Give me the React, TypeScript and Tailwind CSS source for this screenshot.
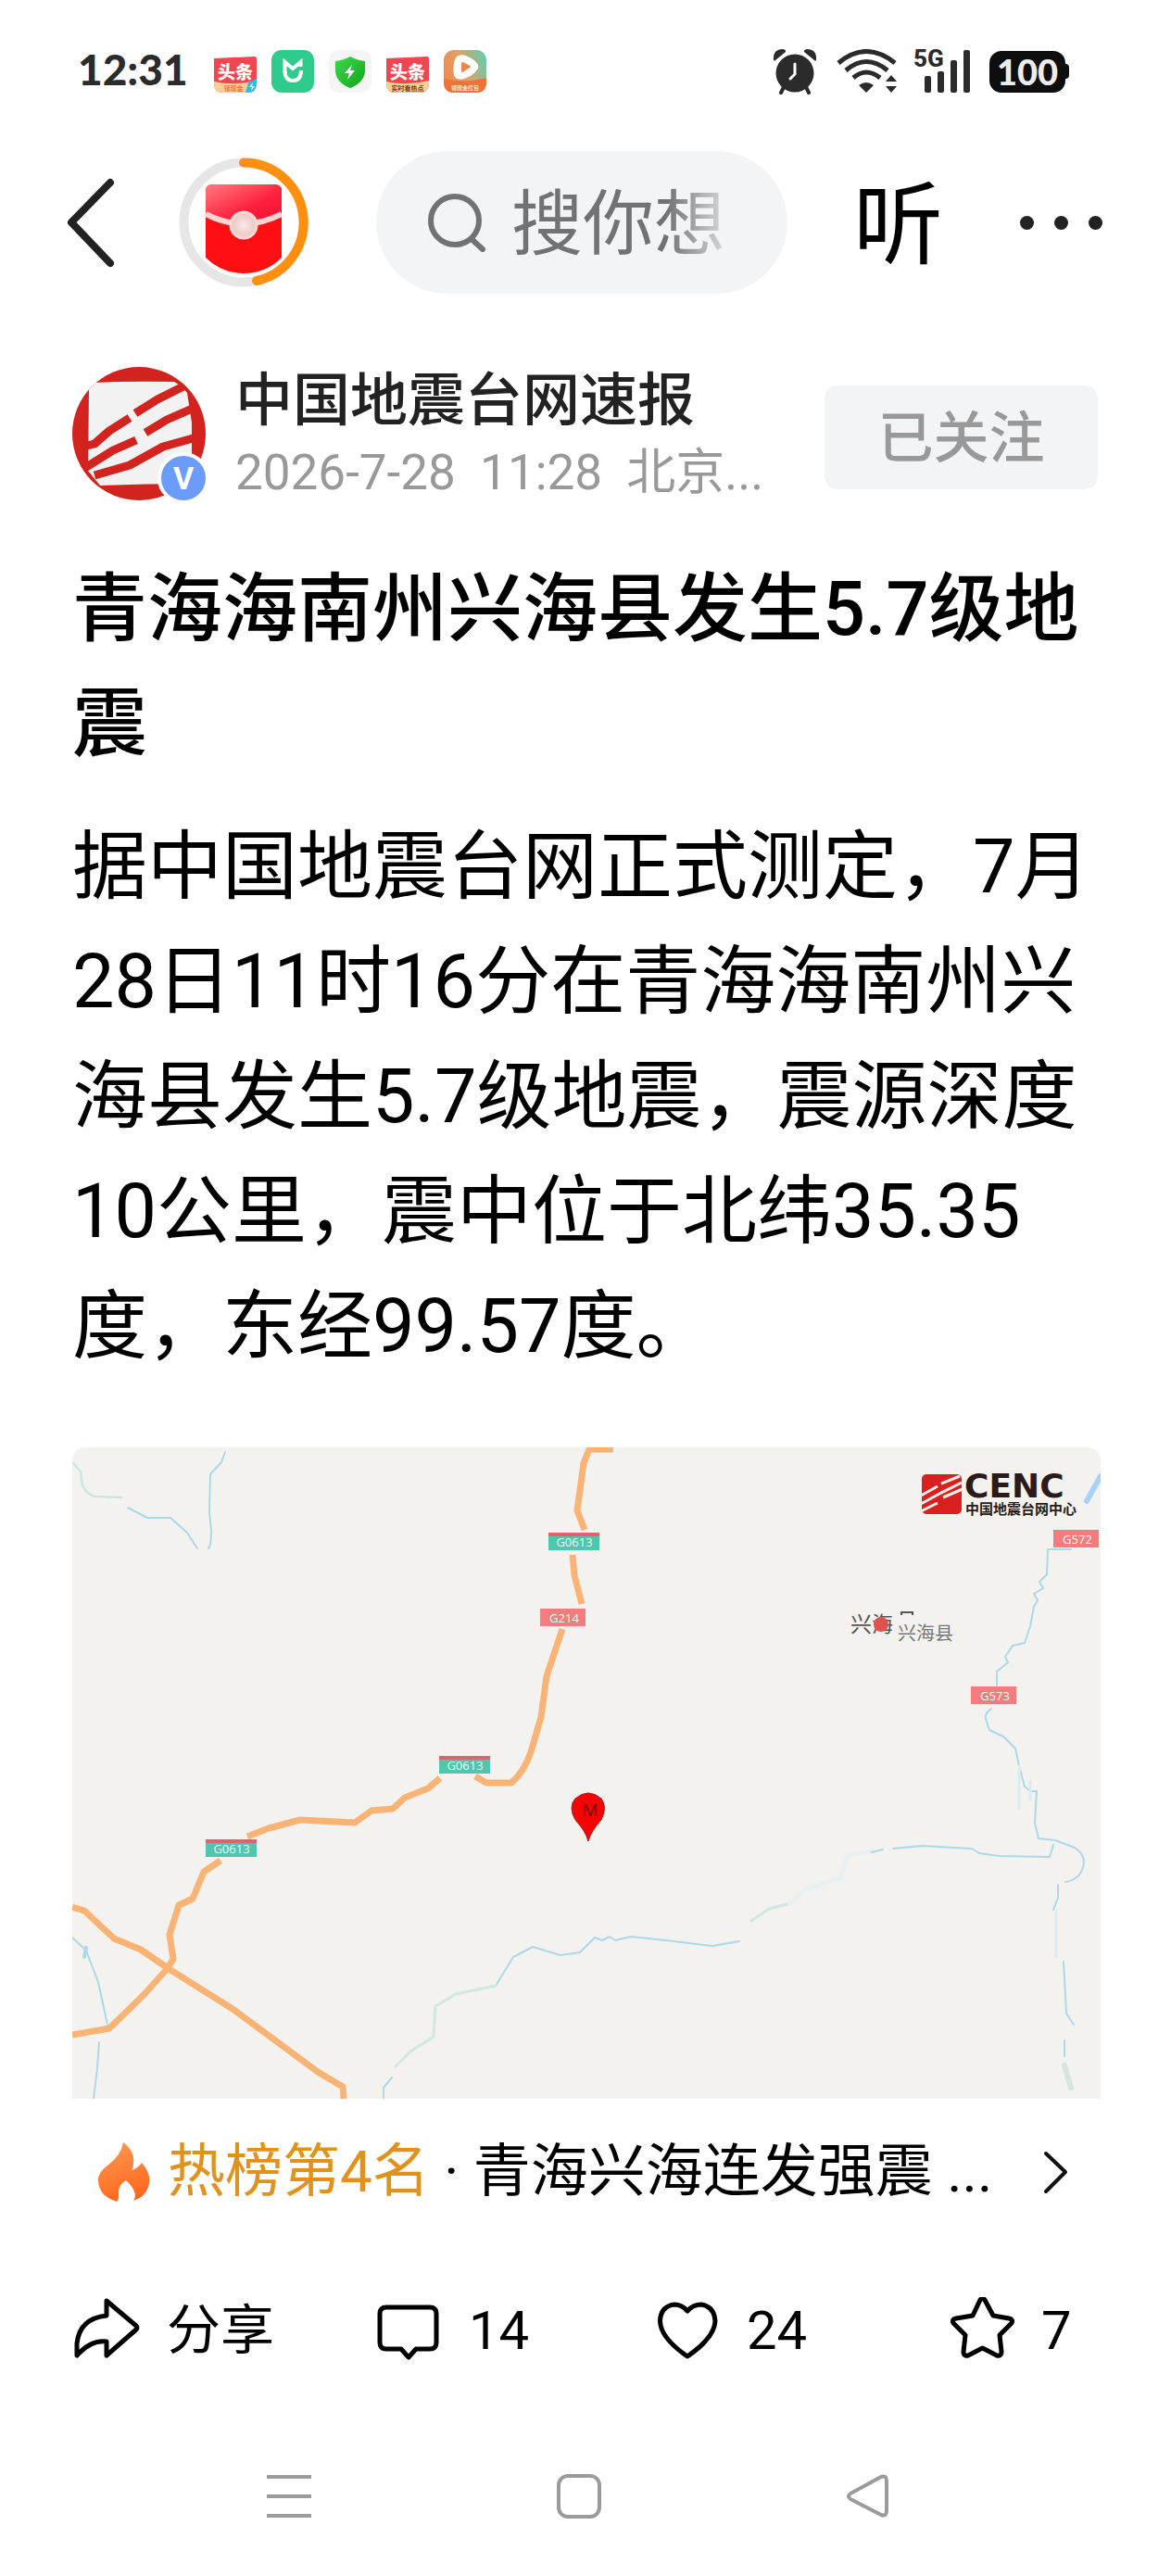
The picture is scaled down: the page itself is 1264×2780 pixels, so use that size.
import React from "react";

const CJK = "font-[Roboto,'Noto_Sans_CJK_SC',sans-serif]";

function ToutiaoBadge({ caption, accent }: { caption: string; accent: boolean }) {
  return (
    <svg viewBox="0 0 46 46" className="size-[46px]" role="img" aria-label="头条">
      <defs>
        <clipPath id={accent ? "tt-a" : "tt-b"}>
          <path d="M0 9 L44 7 Q46 7 46 10 V36 Q46 46 36 46 H10 Q0 46 0 36 Z" />
        </clipPath>
      </defs>
      <g clipPath={accent ? "url(#tt-a)" : "url(#tt-b)"}>
        <rect width="46" height="46" fill="#f0464f" />
        <path d="M0 34 Q22 39 46 33 V46 H0 Z" fill="#fbcf94" />
        {accent && <path d="M37 35 L46 31 V46 H34 Z" fill="#2cbcf0" />}
        {accent && <path d="M42 35 l-4 5 h3 l-1 4 4 -5 h-3 z" fill="#fff" />}
      </g>
      <text x="23" y="31" textAnchor="middle" fontSize="19" fontWeight="900" fill="#fff" fontFamily="Noto Sans CJK SC">头条</text>
      <text x={accent ? 21 : 23} y="44" textAnchor="middle" fontSize="7" fontWeight="700" fill={accent ? "#f0763c" : "#7a3b12"} fontFamily="Noto Sans CJK SC">{caption}</text>
    </svg>
  );
}

function StatusBar() {
  return (
    <div className="flex h-[154px] items-center justify-between pl-[84px] pr-[110px] text-[#2b2b2b]">
      <div className="flex items-center gap-4">
        <time className="mr-3 w-[119px] pb-1 whitespace-nowrap font-[Lato,sans-serif] text-[46px] leading-none font-black">12:31</time>
        <ToutiaoBadge caption="领现金" accent />
        <svg viewBox="0 0 46 46" className="size-[46px]" aria-hidden="true">
          <rect width="46" height="46" rx="11" fill="#2ecb8c" />
          <path d="M14.500 25 V13 L23 20 L31.500 13 V18" fill="none" stroke="#fff" strokeWidth="4" />
          <path d="M14.500 23 Q15 33 23 33 Q32 33 32 22" fill="none" stroke="#fff" strokeWidth="4" />
        </svg>
        <svg viewBox="0 0 46 46" className="size-[46px]" aria-hidden="true">
          <defs>
            <linearGradient id="shield" x1="0" y1="0" x2="1" y2="1">
              <stop offset="0" stopColor="#3bdc4a" />
              <stop offset="1" stopColor="#12a41c" />
            </linearGradient>
          </defs>
          <rect width="46" height="46" rx="11" fill="#f5f5f5" />
          <path d="M23 7 Q30 11 39 12 V23 Q38 35 23 41 Q8 35 7 23 V12 Q16 11 23 7 Z" fill="url(#shield)" />
          <path d="M25 16 L17 25 h5 l-2 7 8 -10 h-5 z" fill="#fff" />
        </svg>
        <ToutiaoBadge caption="实时看热点" accent={false} />
        <svg viewBox="0 0 46 46" className="size-[46px]" aria-hidden="true">
          <defs>
            <linearGradient id="player" x1="0" y1="0.600" x2="1" y2="0.200">
              <stop offset="0" stopColor="#f58a4e" />
              <stop offset="0.500" stopColor="#d7a468" />
              <stop offset="1" stopColor="#62cdb0" />
            </linearGradient>
          </defs>
          <rect width="46" height="46" rx="11" fill="url(#player)" />
          <path d="M0 31 Q22 36 46 30 V35 Q46 46 35 46 H11 Q0 46 0 35 Z" fill="#f0723a" />
          <path d="M14 7 Q20 3 28 8 Q39 14 37 20 Q33 27 22 31 Q13 33 11 27 Q9 14 14 7 Z" fill="#fff" />
          <path d="M20 14 L28 18 L20 23 Z" fill="#f0844a" stroke="#f0844a" strokeWidth="2" strokeLinejoin="round" />
          <text x="23" y="43" textAnchor="middle" fontSize="6" fontWeight="700" fill="#fde4d4" fontFamily="Noto Sans CJK SC">领现金红包</text>
        </svg>
      </div>
      <div className="flex items-center">
        <svg viewBox="0 0 48 50" className="h-[50px] w-12" fill="currentColor" aria-label="闹钟" role="img">
          <circle cx="24" cy="27" r="20.500" />
          <path d="M1 13 Q0 1 11 1 Q15 2 14 4 L3 13 Q2 14 1 13 Z M47 13 Q48 1 37 1 Q33 2 34 4 L45 13 Q46 14 47 13 Z" />
          <path d="M12 42 L9 48 M36 42 L39 48" stroke="currentColor" strokeWidth="4" strokeLinecap="round" />
          <path d="M24 17 V28 L19 33" fill="none" stroke="#fff" strokeWidth="3" strokeLinecap="round" />
        </svg>
        <svg viewBox="0 0 66 48" className="ml-[21px] h-12 w-[66px]" fill="none" stroke="currentColor" strokeWidth="5" aria-label="无线网络" role="img">
          <path d="M2 15 Q32 -10 63 15" />
          <path d="M10 23 Q32 4 55 23" />
          <path d="M18 31 Q32 19 47 31" />
          <path d="M24 39 Q32 33 40 39 L32 47 Z" fill="currentColor" stroke="none" />
          <path d="M59 28 L65 35 H53 Z M59 47 L53 40 H65 Z" fill="currentColor" stroke="none" />
        </svg>
        <svg viewBox="0 -8 62 66" className="ml-[17px] h-[66px] w-[62px]" fill="currentColor" aria-label="5G" role="img">
          <text x="0" y="20" fontSize="26" fontWeight="800" fontFamily="Roboto">5G</text>
          <rect x="12" y="30" width="7" height="18" rx="2" />
          <rect x="26" y="25" width="7" height="23" rx="2" />
          <rect x="40" y="13" width="7" height="35" rx="2" />
          <rect x="54" y="2" width="7" height="46" rx="2" />
        </svg>
        <div className="ml-5 flex items-center">
          <span className="flex h-[45px] w-[82px] items-center justify-center rounded-[13px] bg-[#0e0e0e] font-[Lato,sans-serif] text-[38px] leading-none font-black text-[#ececec]">100</span>
          <span className="h-4 w-1 rounded-r bg-[#0e0e0e]" />
        </div>
      </div>
    </div>
  );
}

function Header() {
  return (
    <header className="flex h-[172px] items-center pl-[70px] pr-[74px]">
      <button aria-label="返回" className="shrink-0">
        <svg viewBox="0 0 56 100" className="h-[100px] w-14" fill="none" stroke="#222" strokeWidth="8" strokeLinecap="round" strokeLinejoin="round">
          <path d="M49 7 L7 50 L49 94" />
        </svg>
      </button>
      <button aria-label="红包" className="ml-[67px] shrink-0">
        <svg viewBox="0 0 140 140" className="size-[140px]" fill="none">
          <defs>
            <linearGradient id="flap" x1="0" y1="0" x2="1" y2="1">
              <stop offset="0" stopColor="#ff7a80" />
              <stop offset="0.600" stopColor="#ff1f3c" />
              <stop offset="1" stopColor="#f30b30" />
            </linearGradient>
            <radialGradient id="seal">
              <stop offset="0" stopColor="#fbe9e6" />
              <stop offset="1" stopColor="#eac4c0" />
            </radialGradient>
          </defs>
          <circle cx="70" cy="70" r="64.500" stroke="#e6e6e6" strokeWidth="10" />
          <path d="M70 5.500 A64.500 64.500 0 0 1 84 133" stroke="#ff8f0f" strokeWidth="10" strokeLinecap="round" />
          <path d="M29 36 Q29 29 37 29 H103 Q111 29 111 36 V108 Q94 125 70 125 Q46 125 29 108 Z" fill="#ff0f12" />
          <path d="M29 36 Q29 29 37 29 H103 Q111 29 111 36 V60 Q70 82 29 60 Z" fill="url(#flap)" />
          <path d="M29 61 Q70 82 111 61" stroke="#fbd3d2" strokeWidth="6" />
          <circle cx="70" cy="73" r="14" fill="url(#seal)" stroke="#f9d9d6" strokeWidth="3" />
        </svg>
      </button>
      <label className="ml-[73px] flex h-[154px] min-w-0 flex-1 items-center rounded-full bg-[#f3f4f6] pl-14">
        <svg viewBox="0 0 64 64" className="size-16 shrink-0" fill="none" stroke="#707274" strokeWidth="6" strokeLinecap="round">
          <circle cx="29" cy="30" r="26" />
          <path d="M47 50 L59 61" />
        </svg>
        <input
          type="text"
          aria-label="搜索"
          placeholder="搜你想"
          className={`${CJK} ml-[26px] h-[116px] w-[232px] bg-transparent pt-1.5 text-[77px] outline-none placeholder:text-[#707274] placeholder:opacity-100 [mask-image:linear-gradient(to_right,black_72%,rgba(0,0,0,0.2))]`}
        />
      </label>
      <button className={`${CJK} ml-[71px] shrink-0 pt-2 text-[97px] leading-none text-black`}>听</button>
      <button aria-label="更多" className="ml-[83px] flex shrink-0 gap-[22px]">
        <span className="size-[15px] rounded-full bg-[#222]" />
        <span className="size-[15px] rounded-full bg-[#222]" />
        <span className="size-[15px] rounded-full bg-[#222]" />
      </button>
    </header>
  );
}

function Author() {
  return (
    <div className="flex items-start">
      <div className="relative shrink-0">
        <svg viewBox="0 0 144 144" className="size-36" role="img" aria-label="中国地震台网速报">
          <defs>
            <clipPath id="avatar"><circle cx="72" cy="72" r="72" /></clipPath>
          </defs>
          <g clipPath="url(#avatar)">
            <rect width="144" height="144" fill="#d2231e" />
            <path d="M24 17 Q60 15 110 16 Q118 20 124 28 L129 60 L129 126 Q80 126 30 128 L17 112 L18 24 Z" fill="#f2f2f2" />
            <g fill="none" stroke="#d2231e" strokeWidth="9" strokeLinejoin="round">
              <path d="M68 50 L92 35 L122 20" />
              <path d="M62 55 L40 69 L24 83 L12 86" />
              <path d="M79 71 L102 57 L134 43" />
              <path d="M69 79 L44 90 L12 110" />
              <path d="M134 76 L98 86 L62 106 L24 117" />
            </g>
          </g>
        </svg>
        <span className="absolute -right-1 -bottom-1 flex size-14 items-center justify-center rounded-full border-4 border-white bg-[#6b9cfa] font-[Roboto,sans-serif] text-[34px] leading-none font-bold text-white">V</span>
      </div>
      <div className={`${CJK} ml-8 min-w-0 flex-1`}>
        <div className="truncate text-[62px] leading-[74px] font-medium text-[#222]">中国地震台网速报</div>
        <div className="truncate text-[53px] leading-[80px] whitespace-pre text-[#999]">2026-7-28  11:28  北京...</div>
      </div>
      <button className={`${CJK} mt-5 mr-[3px] h-28 w-[295px] shrink-0 rounded-[14px] bg-[#f3f4f6] pt-1 text-[60px] leading-none font-medium text-[#999]`}>已关注</button>
    </div>
  );
}

type Tag = { x: number; y: number; text: string; green: boolean };
const tags: Tag[] = [
  { x: 514, y: 92, text: "G0613", green: true },
  { x: 505, y: 174, text: "G214", green: false },
  { x: 396, y: 333, text: "G0613", green: true },
  { x: 144, y: 423, text: "G0613", green: true },
  { x: 1059, y: 89, text: "G572", green: false },
  { x: 970, y: 258, text: "G573", green: false },
];

function QuakeMap() {
  return (
    <svg viewBox="0 0 1110 703" className="block w-full rounded-t-[14px]" role="img" aria-label="震中位置地图">
      <rect width="1110" height="703" fill="#f3f2ee" />
      <g fill="none" stroke="#acd8ea" strokeWidth="2" strokeLinejoin="round" strokeLinecap="round">
        <path d="M0 16 L9 26 L11 41 Q15 50 24 53 L53 54" stroke="#c3e6df" />
        <path d="M60 65 L81 76 L106 76 L124 92 L135 109 M165 5 L161 16 L149 29 L148 70 L150 89 Q150 106 147 109" />
        <path d="M0 529 L15 543 L28 577 L38 623 M29 642 L27 670 L23 703" />
        <path d="M15 540 l-2 10" strokeWidth="4" />
        <path d="M336 703 V691 L345 680 M457 581 L476 550 L497 539 L527 548 L548 545 L564 529 L572 532 L580 528 L586 532 L603 528 L641 532 L691 538 L720 533" />
        <path d="M349 668 L365 652 L390 636 L392 603 L414 590 L457 581 M733 511 L752 498 L775 492" stroke="#cfe8e0" strokeWidth="3" />
        <path d="M775 492 L791 477 L829 465 L837 440 L863 436" stroke="#e9f0f1" strokeWidth="5" />
        <path d="M863 437 L875 434 M886 433 L917 430 L971 433 L979 438 L1001 441 L1055 442 L1059 429" />
        <path d="M1110 31 L1095 58" strokeWidth="6" stroke="#a8d3f6" />
        <path d="M1078 110 H1053 L1052 137 L1044 145 L1048 152 L1038 158 L1042 165 L1038 172 L1034 193 L1028 211 L1015 214 L1007 226 L1010 232 L998 242 V257 M992 282 Q984 288 986 293 L990 305 L1005 312 L1018 325 L1022 344 L1028 366 L1034 371 L1041 371 L1039 405 L1043 422 L1061 424 L1082 432 Q1092 438 1092 448 Q1090 466 1072 469 M1064 472 L1064 486 L1059 499" />
        <path d="M1034 360 V380 M1022 344 V390 M1062 500 V550" stroke="#d9edf0" strokeWidth="3" />
        <path d="M1070 555 L1073 611 L1081 623 M1071 640 V657" />
        <path d="M1071 667 L1078 691" strokeWidth="6" stroke="#d6e6dd" />
      </g>
      <g fill="none" stroke="#f8b375" strokeWidth="7" strokeLinejoin="round">
        <path d="M584 2 H558 L552 17 L545 68 L553 89 M540 116 L542 138 L550 169" />
        <path d="M529 196 L512 247 L506 291 L497 322 Q490 348 474 362 H447 L435 355 M397 357 L384 368 L359 378 L346 390 L323 392 L305 405 L246 402 L212 411 L189 420 M160 446 L142 458 L130 487 L115 494 L105 526 L109 552 L103 562" />
        <path d="M0 496 L13 500 L45 530 L74 542 L103 562 L173 606 L265 674 L292 690 L293 703" />
        <path d="M103 562 L78 590 L40 627 L0 634" />
      </g>
      {tags.map((t, i) => (
        <g key={i}>
          <rect x={t.x} y={t.y} width={t.green ? 55 : 49} height="19" fill={t.green ? "#4fc6ad" : "#f47c7e"} />
          {t.green && <rect x={t.x} y={t.y} width="55" height="4" fill="#d9666e" />}
          <text x={t.x + (t.green ? 28 : 26)} y={t.y + 15} textAnchor="middle" fontSize="13" fill="#e9fffa" fontFamily="Open Sans">{t.text}</text>
        </g>
      ))}
      <g fontFamily="Noto Sans CJK SC">
        <text x="840" y="199" fontSize="23" fill="#555">兴海</text>
        <path d="M895 181 V178 H907 V181" fill="none" stroke="#555" strokeWidth="2" />
        <circle cx="873" cy="191" r="8" fill="#dd5350" />
        <text x="891" y="208" fontSize="20" fill="#777">兴海县</text>
      </g>
      <path d="M557 425 Q554 414 543 402 Q535 388 543 379 Q557 367 571 379 Q578 388 571 402 Q560 414 557 425 Z" fill="#f50406" stroke="#a52020" strokeWidth="1" />
      <text x="559" y="398" textAnchor="middle" fontSize="19" fill="#6b0d0a" fontFamily="Open Sans">M</text>
      <rect x="917" y="29" width="43" height="43" rx="5" fill="#d9201f" />
      <path d="M916 52 L934 42 M938 39 L958 31 M916 61 L936 50 L960 38 M916 69 L934 60 M940 54 L961 45" fill="none" stroke="#f7eeeb" strokeWidth="3" />
      <text x="963" y="54" fontSize="36" fontWeight="700" fill="#2a1a1a" fontFamily="DejaVu Sans">CENC</text>
      <text x="964" y="72" fontSize="15" fontWeight="700" fill="#2a1a1a" fontFamily="Noto Sans CJK SC">中国地震台网中心</text>
    </svg>
  );
}

function Actions() {
  const icon = "h-[72px] w-[76px] shrink-0";
  const button = "flex items-center gap-[26px] whitespace-nowrap";
  return (
    <div className={`${CJK} grid grid-cols-[326fr_300fr_318fr_166fr] text-[58px] leading-[80px] text-black`}>
      <button className={button}>
        <svg viewBox="0 0 76 72" className={icon} fill="none" stroke="currentColor" strokeWidth="5" strokeLinecap="round" strokeLinejoin="round">
          <path d="M37 4 L69 31 Q71 33 69 35 L37 63 V48 Q20 46 5 63 V50 Q8 23 37 20 Z" />
        </svg>
        分享
      </button>
      <button className={button}>
        <svg viewBox="0 0 76 72" className={icon} fill="none" stroke="currentColor" strokeWidth="5" strokeLinejoin="round">
          <path d="M13 11 H60 Q67 11 67 18 V49 Q67 56 60 56 H45 L37 65 L29 56 H13 Q6 56 6 49 V18 Q6 11 13 11 Z" />
        </svg>
        14
      </button>
      <button className={button}>
        <svg viewBox="0 0 76 72" className={icon} fill="none" stroke="currentColor" strokeWidth="5" strokeLinejoin="round">
          <path d="M38 15 Q32 8 24 8 Q9 10 8.500 26 Q9 44 38 64 Q67 44 68 26 Q67 10 53 8 Q44 8 38 15 Z" />
        </svg>
        24
      </button>
      <button className={button}>
        <svg viewBox="0 0 76 72" className={icon} fill="none" stroke="currentColor" strokeWidth="5" strokeLinejoin="round">
          <path d="M36 3 Q38.500 0 41 3 L50 20 L67 23 Q72 24 70 28 L57 41 L59 59 Q59 64 54 63 L38.500 55 L23 63 Q18 64 18 59 L20 41 L7 28 Q5 24 10 23 L28 20 Z" />
        </svg>
        7
      </button>
    </div>
  );
}

export default function App() {
  return (
    <div className="bg-white">
      <StatusBar />
      <Header />
      <main className="pt-[70px] pr-[76px] pl-[78px]">
        <Author />
        <h1 className={`${CJK} mt-[46px] text-[81px] leading-[124px] font-medium text-black`}>青海海南州兴海县发生5.7级地震</h1>
        <p className={`${CJK} mt-[30px] text-[81px] leading-[124px] text-black`}>
          据中国地震台网正式测定，7月28日11时16分在青海海南州兴海县发生5.7级地震，震源深度10公里，震中位于北纬35.35度，东经99.57度。
        </p>
        <div className="mt-[68px]"><QuakeMap /></div>
        <a href="#hot" className={`${CJK} mt-[34px] flex items-center pr-[34px] pl-[25px] text-[62px] leading-[90px] text-black`}>
          <svg viewBox="0 0 60 68" className="h-[68px] w-[60px] shrink-0" aria-hidden="true">
            <defs>
              <linearGradient id="fire" x1="0" y1="0" x2="0.300" y2="1">
                <stop offset="0" stopColor="#ff9a56" />
                <stop offset="1" stopColor="#ff6a1f" />
              </linearGradient>
            </defs>
            <path d="M30 2 Q43 12 41 25 Q41 29 39 32 Q46 30 50 24 Q60 36 58 46 Q56 60 41 65 Q47 56 33 43 Q24 48 25 58 Q26 62 23 66 Q4 60 3 44 Q2 35 13 27 Q28 16 30 2 Z" fill="url(#fire)" />
          </svg>
          <span className="ml-[18px] min-w-0 flex-1 truncate whitespace-pre">
            <span className="text-[#e0921c]">热榜第4名</span> · 青海兴海连发强震 ...
          </span>
          <svg viewBox="0 0 30 50" className="h-[50px] w-[30px] shrink-0" fill="none" stroke="#111" strokeWidth="4" strokeLinecap="round" strokeLinejoin="round" aria-hidden="true">
            <path d="M5 5 L26 25 L5 46" />
          </svg>
        </a>
        <div className="mt-[86px]"><Actions /></div>
      </main>
      <nav className="mt-[115px] grid grid-cols-3 justify-items-center pr-[170px] pb-[61px] pl-[156px] text-[#9b9b9b]">
        <button aria-label="最近任务">
          <svg viewBox="0 0 48 48" className="size-12" stroke="currentColor" strokeWidth="4">
            <path d="M0 3 H48 M0 24 H48 M0 45 H48" />
          </svg>
        </button>
        <button aria-label="主屏幕">
          <svg viewBox="0 0 48 48" className="size-12" fill="none" stroke="currentColor" strokeWidth="4">
            <rect x="2" y="2" width="44" height="44" rx="10" />
          </svg>
        </button>
        <button aria-label="返回上一页">
          <svg viewBox="0 0 48 48" className="size-12" fill="none" stroke="currentColor" strokeWidth="4" strokeLinejoin="round">
            <path d="M37 3 Q43 1 43 7 V40 Q43 46 37 44 L4 27 Q0 24 4 21 Z" />
          </svg>
        </button>
      </nav>
    </div>
  );
}
